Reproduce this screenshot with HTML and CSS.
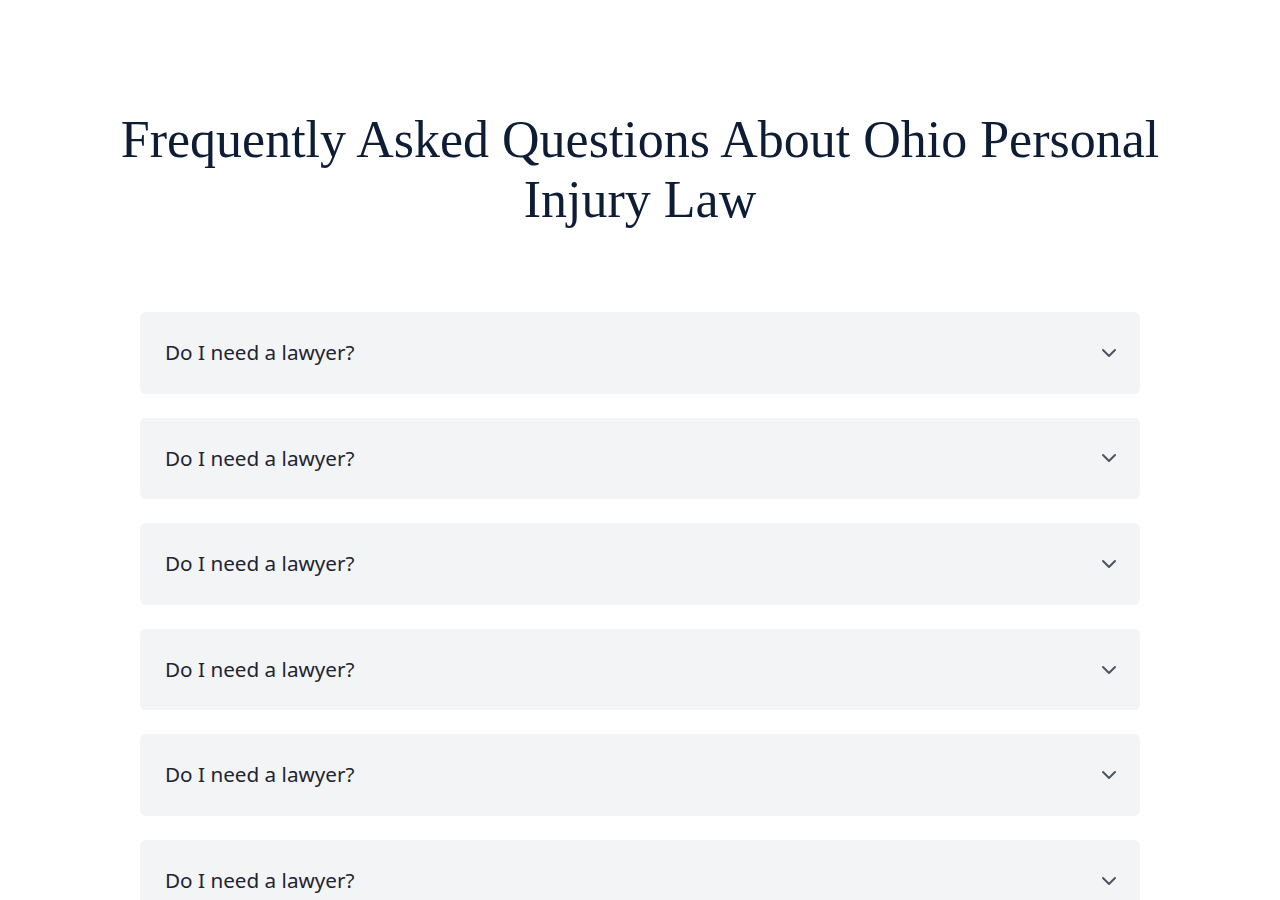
FILE: index.html
```html
<!DOCTYPE html>
<html lang="en">
<head>
<meta charset="utf-8">
<title>FAQ</title>
<link rel="stylesheet" href="styles.css">
</head>
<body>
<section class="faq">
  <h1 class="faq-title">Frequently Asked Questions About Ohio Personal Injury Law</h1>
  <div class="faq-list">
    <div class="faq-item"><span class="faq-q">Do I need a lawyer?</span><svg class="chev" viewBox="0 0 20 20" width="20" height="20"><path d="M4 7l6 6 6-6" fill="none" stroke="currentColor" stroke-width="2" stroke-linecap="round" stroke-linejoin="round"/></svg></div>
    <div class="faq-item"><span class="faq-q">Do I need a lawyer?</span><svg class="chev" viewBox="0 0 20 20" width="20" height="20"><path d="M4 7l6 6 6-6" fill="none" stroke="currentColor" stroke-width="2" stroke-linecap="round" stroke-linejoin="round"/></svg></div>
    <div class="faq-item"><span class="faq-q">Do I need a lawyer?</span><svg class="chev" viewBox="0 0 20 20" width="20" height="20"><path d="M4 7l6 6 6-6" fill="none" stroke="currentColor" stroke-width="2" stroke-linecap="round" stroke-linejoin="round"/></svg></div>
    <div class="faq-item"><span class="faq-q">Do I need a lawyer?</span><svg class="chev" viewBox="0 0 20 20" width="20" height="20"><path d="M4 7l6 6 6-6" fill="none" stroke="currentColor" stroke-width="2" stroke-linecap="round" stroke-linejoin="round"/></svg></div>
    <div class="faq-item"><span class="faq-q">Do I need a lawyer?</span><svg class="chev" viewBox="0 0 20 20" width="20" height="20"><path d="M4 7l6 6 6-6" fill="none" stroke="currentColor" stroke-width="2" stroke-linecap="round" stroke-linejoin="round"/></svg></div>
    <div class="faq-item"><span class="faq-q">Do I need a lawyer?</span><svg class="chev" viewBox="0 0 20 20" width="20" height="20"><path d="M4 7l6 6 6-6" fill="none" stroke="currentColor" stroke-width="2" stroke-linecap="round" stroke-linejoin="round"/></svg></div>
  </div>
</section>
</body>
</html>
```
FILE: styles.css
```css
html, body {
  margin: 0;
  padding: 0;
  background: #ffffff;
}
body {
  font-family: "Noto Sans", "Open Sans", sans-serif;
}
.faq {
  padding-top: 110px;
  display: flex;
  flex-direction: column;
  align-items: center;
}
.faq-title {
  margin: 0 0 82px;
  width: 1080px;
  text-align: center;
  font-family: "Liberation Serif", serif;
  font-weight: 400;
  font-size: 52px;
  line-height: 60px;
  color: #0e1d36;
}
.faq-list {
  width: 1000px;
  display: flex;
  flex-direction: column;
  gap: 24px;
}
.faq-item {
  background: #f3f4f6;
  border-radius: 6px;
  padding: 24px 21px 24px 25px;
  display: flex;
  align-items: center;
  justify-content: space-between;
}
.faq-q {
  font-size: 20.7px;
  line-height: 33.6px;
  color: #1f2433;
}
.chev {
  color: #4b5563;
  flex-shrink: 0;
}
```
